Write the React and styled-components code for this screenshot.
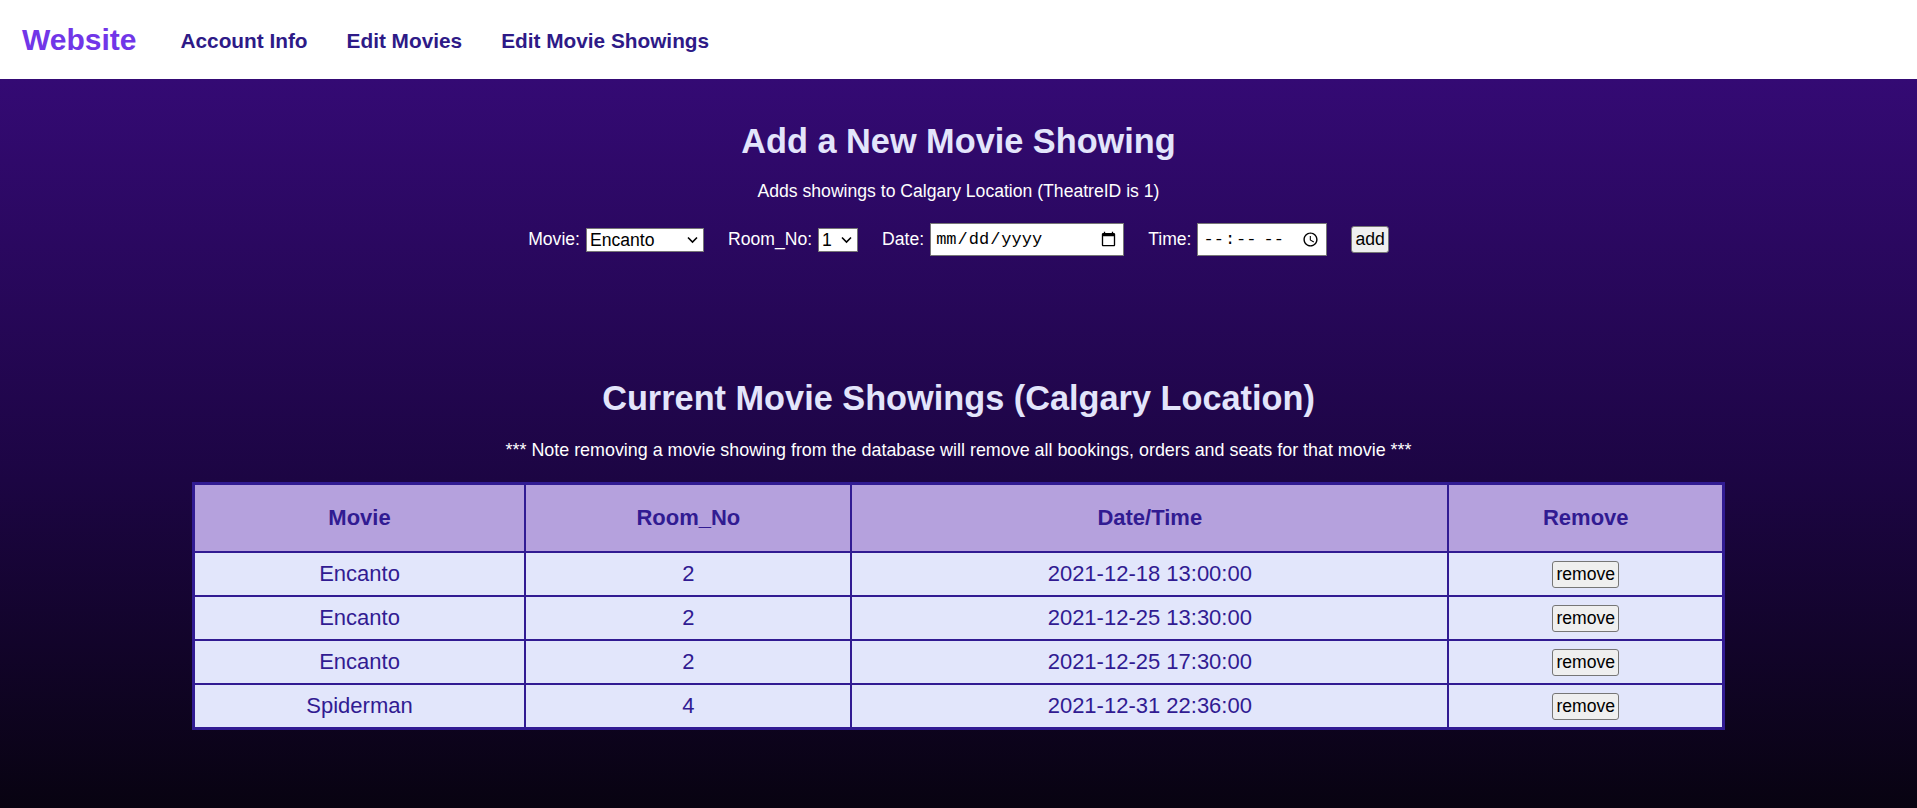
import React from 'react'
import styled, { createGlobalStyle } from 'styled-components'

const GlobalStyle = createGlobalStyle`
  html, body {
    margin: 0;
    padding: 0;
    background: #080311;
    font-family: "Liberation Sans", Arial, sans-serif;
  }
`

const Nav = styled.nav`
  height: 79px;
  background: #ffffff;
  display: flex;
  align-items: center;
  padding: 3px 0 0 22px;
  box-sizing: border-box;
`

const Logo = styled.a`
  font-size: 30px;
  font-weight: bold;
  color: #7136e8;
  text-decoration: none;
  margin-right: 44px;
  margin-top: -2px;
`

const NavLink = styled.a`
  font-size: 20.8px;
  font-weight: bold;
  color: #2e1a87;
  text-decoration: none;
  margin-right: 39px;
`

const Main = styled.main`
  min-height: calc(100vh - 79px);
  background: linear-gradient(to bottom, #340a74 0%, #1c0543 55%, #080311 100%);
  text-align: center;
  padding: 43px 0 40px;
  box-sizing: border-box;
`

const Title = styled.h1`
  margin: ${(p) => p.$top || 0}px 0 0;
  font-size: 34.3px;
  line-height: 39px;
  font-weight: bold;
  color: #e3e5fb;
`

const Caption = styled.p`
  margin: ${(p) => p.$top || 20}px 0 0;
  font-size: ${(p) => p.$size || 17.6}px;
  line-height: 20px;
  color: #ffffff;
`

const FormRow = styled.form`
  margin-top: 22px;
  display: flex;
  justify-content: center;
  align-items: center;
  gap: 24px;
`

const Field = styled.label`
  display: flex;
  align-items: center;
  gap: 6px;
  font-size: 17.6px;
  color: #ffffff;
`

const SelectWrap = styled.span`
  position: relative;
  display: inline-flex;
`

const Select = styled.select`
  appearance: none;
  -webkit-appearance: none;
  width: ${(p) => p.$w}px;
  height: 24px;
  box-sizing: border-box;
  font-family: "Liberation Sans", Arial, sans-serif;
  font-size: 17.6px;
  line-height: 22px;
  color: #000;
  background: #ffffff;
  border: 1px solid #767676;
  border-radius: 0;
  padding: 0 20px 0 3px;
  outline: none;
`

const Chevron = styled.svg`
  position: absolute;
  right: 6px;
  top: 8px;
  width: 11px;
  height: 8px;
  pointer-events: none;
`

const DateInput = styled.input`
  width: ${(p) => p.$w}px;
  height: 33px;
  box-sizing: border-box;
  font-family: "Liberation Mono", monospace;
  font-size: 17px;
  color: #000;
  background: #ffffff;
  border: 1px solid #767676;
  padding: 1px 4px;
`

const Button = styled.button`
  height: 27px;
  padding: 0 3px;
  font-family: "Liberation Sans", Arial, sans-serif;
  font-size: 17.6px;
  color: #000;
  background: #efefef;
  border: 1px solid #767676;
  border-radius: 3px;
  cursor: pointer;
`

const Table = styled.table`
  width: 80%;
  margin: 22px auto 0;
  border-collapse: collapse;
  border: 3px solid #311b92;
`

const Th = styled.th`
  width: ${(p) => p.$w};
  height: 66px;
  padding: 0;
  background: #b5a1dd;
  color: #311b92;
  font-size: 22px;
  font-weight: bold;
  border: 2px solid #311b92;
`

const Td = styled.td`
  height: 42px;
  padding: 0;
  background: #e2e6fb;
  color: #311b92;
  font-size: 22px;
  border: 2px solid #311b92;
`

const showings = [
  { movie: 'Encanto', room: 2, time: '2021-12-18 13:00:00' },
  { movie: 'Encanto', room: 2, time: '2021-12-25 13:30:00' },
  { movie: 'Encanto', room: 2, time: '2021-12-25 17:30:00' },
  { movie: 'Spiderman', room: 4, time: '2021-12-31 22:36:00' },
]

const Dropdown = ({ w, value, options }) => (
  <SelectWrap>
    <Select $w={w} defaultValue={value}>
      {options.map((o) => (
        <option key={o}>{o}</option>
      ))}
    </Select>
    <Chevron viewBox="0 0 11 8">
      <path d="M1 1.5 L5.5 6 L10 1.5" fill="none" stroke="#000" strokeWidth="1.6" />
    </Chevron>
  </SelectWrap>
)

export default function App() {
  return (
    <>
      <GlobalStyle />
      <Nav>
        <Logo href="#">Website</Logo>
        <NavLink href="#">Account Info</NavLink>
        <NavLink href="#">Edit Movies</NavLink>
        <NavLink href="#">Edit Movie Showings</NavLink>
      </Nav>
      <Main>
        <Title>Add a New Movie Showing</Title>
        <Caption>Adds showings to Calgary Location (TheatreID is 1)</Caption>
        <FormRow onSubmit={(e) => e.preventDefault()}>
          <Field>
            Movie:
            <Dropdown w={118} value="Encanto" options={['Encanto', 'Spiderman']} />
          </Field>
          <Field>
            Room_No:
            <Dropdown w={40} value="1" options={['1', '2', '3', '4']} />
          </Field>
          <Field>
            Date:
            <DateInput type="date" $w={194} />
          </Field>
          <Field>
            Time:
            <DateInput type="time" $w={130} />
          </Field>
          <Button type="submit">add</Button>
        </FormRow>

        <Title $top={123}>Current Movie Showings (Calgary Location)</Title>
        <Caption $top={22} $size={17.9}>
          *** Note removing a movie showing from the database will remove all bookings, orders and seats for that movie ***
        </Caption>
        <Table>
          <thead>
            <tr>
              <Th $w="21.7%">Movie</Th>
              <Th $w="21.3%">Room_No</Th>
              <Th $w="39%">Date/Time</Th>
              <Th $w="18%">Remove</Th>
            </tr>
          </thead>
          <tbody>
            {showings.map((s, i) => (
              <tr key={i}>
                <Td>{s.movie}</Td>
                <Td>{s.room}</Td>
                <Td>{s.time}</Td>
                <Td>
                  <Button>remove</Button>
                </Td>
              </tr>
            ))}
          </tbody>
        </Table>
      </Main>
    </>
  )
}
